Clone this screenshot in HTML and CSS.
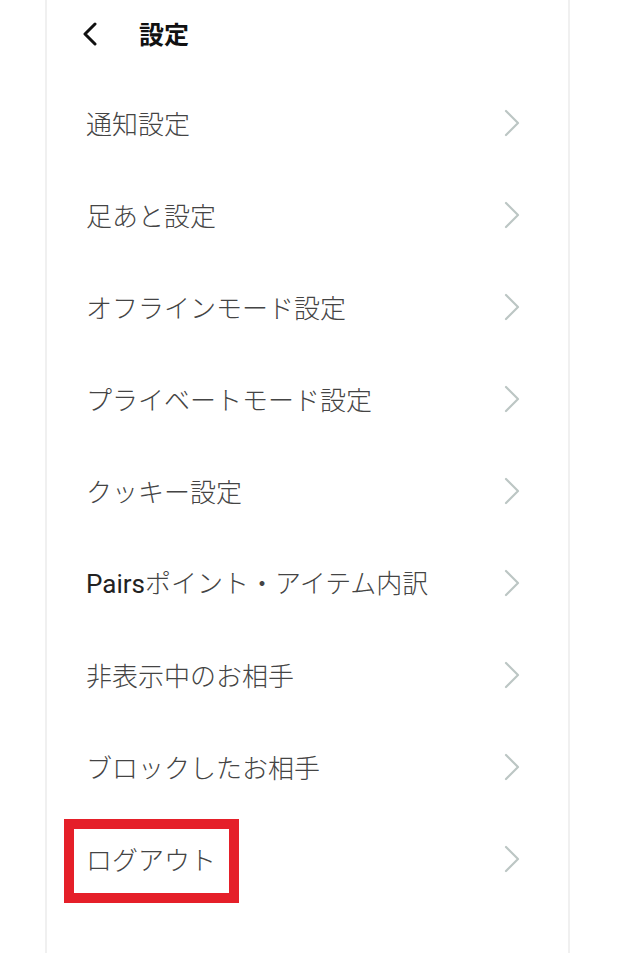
FILE: index.html
```html
<!DOCTYPE html>
<html lang="ja">
<head>
<meta charset="utf-8">
<title>設定</title>
<link rel="stylesheet" href="styles.css">
</head>
<body>
<div class="panel">
  <header class="topbar">
    <svg class="back" width="16" height="24" viewBox="0 0 16 24"><path d="M13 2 L3 12 L13 22" fill="none" stroke="#111" stroke-width="3" stroke-linecap="round" stroke-linejoin="round"/></svg>
    <h1 class="title">設定</h1>
  </header>
  <ul class="menu">
    <li class="item"><span class="label">通知設定</span><svg class="chev" width="16" height="28" viewBox="0 0 16 28"><path d="M2 2 L14 14 L2 26" fill="none" stroke="#bcc6c4" stroke-width="2.2" stroke-linecap="round" stroke-linejoin="round"/></svg></li>
    <li class="item"><span class="label">足あと設定</span><svg class="chev" width="16" height="28" viewBox="0 0 16 28"><path d="M2 2 L14 14 L2 26" fill="none" stroke="#bcc6c4" stroke-width="2.2" stroke-linecap="round" stroke-linejoin="round"/></svg></li>
    <li class="item"><span class="label">オフラインモード設定</span><svg class="chev" width="16" height="28" viewBox="0 0 16 28"><path d="M2 2 L14 14 L2 26" fill="none" stroke="#bcc6c4" stroke-width="2.2" stroke-linecap="round" stroke-linejoin="round"/></svg></li>
    <li class="item"><span class="label">プライベートモード設定</span><svg class="chev" width="16" height="28" viewBox="0 0 16 28"><path d="M2 2 L14 14 L2 26" fill="none" stroke="#bcc6c4" stroke-width="2.2" stroke-linecap="round" stroke-linejoin="round"/></svg></li>
    <li class="item"><span class="label">クッキー設定</span><svg class="chev" width="16" height="28" viewBox="0 0 16 28"><path d="M2 2 L14 14 L2 26" fill="none" stroke="#bcc6c4" stroke-width="2.2" stroke-linecap="round" stroke-linejoin="round"/></svg></li>
    <li class="item"><span class="label"><span class="latin">Pairs</span>ポイント・アイテム内訳</span><svg class="chev" width="16" height="28" viewBox="0 0 16 28"><path d="M2 2 L14 14 L2 26" fill="none" stroke="#bcc6c4" stroke-width="2.2" stroke-linecap="round" stroke-linejoin="round"/></svg></li>
    <li class="item"><span class="label">非表示中のお相手</span><svg class="chev" width="16" height="28" viewBox="0 0 16 28"><path d="M2 2 L14 14 L2 26" fill="none" stroke="#bcc6c4" stroke-width="2.2" stroke-linecap="round" stroke-linejoin="round"/></svg></li>
    <li class="item"><span class="label">ブロックしたお相手</span><svg class="chev" width="16" height="28" viewBox="0 0 16 28"><path d="M2 2 L14 14 L2 26" fill="none" stroke="#bcc6c4" stroke-width="2.2" stroke-linecap="round" stroke-linejoin="round"/></svg></li>
    <li class="item item-highlight"><span class="label">ログアウト</span><span class="mark"></span><svg class="chev" width="16" height="28" viewBox="0 0 16 28"><path d="M2 2 L14 14 L2 26" fill="none" stroke="#bcc6c4" stroke-width="2.2" stroke-linecap="round" stroke-linejoin="round"/></svg></li>
  </ul>
</div>
</body>
</html>
```
FILE: styles.css
```css
html, body {
  margin: 0;
  padding: 0;
  background: #ffffff;
}
body {
  font-family: "Noto Sans CJK JP", "Noto Sans", sans-serif;
  color: #4a4a4a;
}
.panel {
  margin-left: 45px;
  width: 521px;
  min-height: 953px;
  border-left: 2px solid #f0f0f0;
  border-right: 2px solid #f0f0f0;
  box-sizing: content-box;
}
.topbar {
  height: 66px;
  display: flex;
  align-items: center;
  padding-left: 35px;
  box-sizing: border-box;
}
.back {
  display: block;
  margin-top: 2px;
}
.title {
  margin: 0 0 0 41px;
  font-size: 25px;
  font-weight: 700;
  color: #111111;
  line-height: 1;
}
.menu {
  list-style: none;
  margin: 11px 0 0 0;
  padding: 0;
}
.item {
  position: relative;
  height: 92px;
  display: flex;
  align-items: center;
  justify-content: space-between;
  padding-left: 39px;
  padding-right: 48px;
  box-sizing: border-box;
}
.label {
  font-size: 26px;
  font-weight: 300;
  color: #444444;
  line-height: 1;
  letter-spacing: 0;
}
.latin {
  font-family: Roboto, "Noto Sans", sans-serif;
  color: #222222;
  font-weight: 400;
}
.chev {
  display: block;
}
.mark {
  position: absolute;
  left: 17px;
  top: 6px;
  width: 175px;
  height: 84px;
  border: 10px solid #e51f29;
  box-sizing: border-box;
}
```
